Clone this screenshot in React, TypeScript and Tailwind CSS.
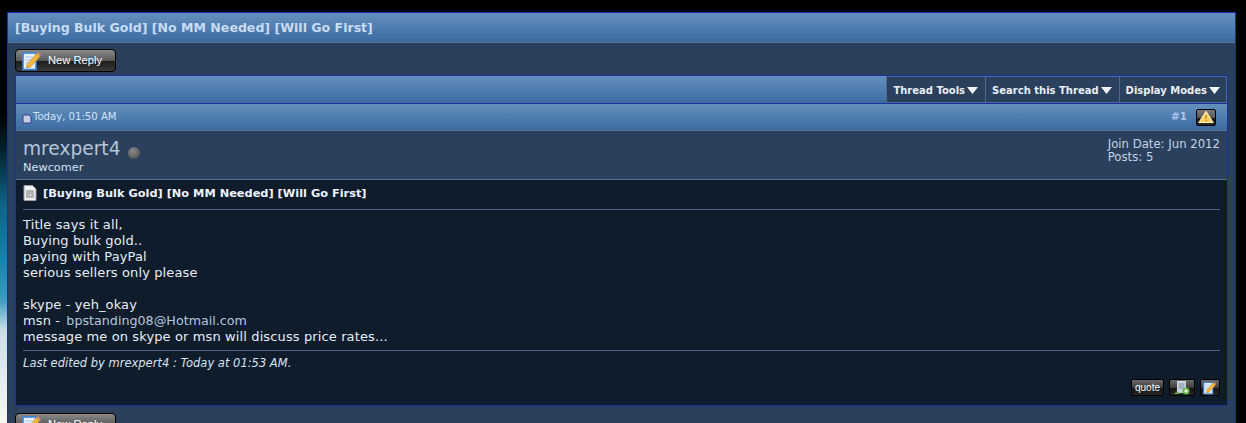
import React from "react";

const font = "font-['DejaVu_Sans',Verdana,sans-serif]";

function PencilDoc({ size = 20 }: { size?: number }) {
  return (
    <svg width={size} height={size} viewBox="0 0 20 20" className="shrink-0">
      <rect x="1" y="2" width="13" height="16.5" fill="#e4eefc" stroke="#3a86de" strokeWidth="1.6" />
      <path d="M3.5 6h7M3.5 9h5M3.5 12h4" stroke="#a9c4e4" strokeWidth="1" />
      <path d="M5 13.5 L14.5 2.5 L18 5.5 L8.5 16 L4.5 17 Z" fill="#f3b63e" stroke="#b9802a" strokeWidth="0.6" />
      <path d="M14.5 2.5 L18 5.5 L19 4 L16 1.2 Z" fill="#e98a7a" />
    </svg>
  );
}

function NewReply() {
  return (
    <button className="w-[101px] h-[23px] rounded-[4px] border border-black bg-[linear-gradient(#8a8a8a_0%,#5a5a5a_50%,#1b1b1b_52%,#3a3a3a_100%)] flex items-center pl-[6px] shrink-0">
      <PencilDoc />
      <span className="ml-[6px] text-white text-[11.2px] font-['Liberation_Sans',Arial,sans-serif] leading-none">New Reply</span>
    </button>
  );
}

function Caret() {
  return (
    <svg width="11" height="7" viewBox="0 0 11 7" className="ml-[2px]">
      <path d="M0 0H11L5.5 7Z" fill="#f2f6fb" />
    </svg>
  );
}

function Tool({ label, last }: { label: string; last?: boolean }) {
  return (
    <div className={`h-full flex items-center pl-[6px] pt-[2px] border-l border-y border-[#4f6a90] bg-[#2b405c] text-[#e8eef6] text-[10px] font-bold whitespace-nowrap ${last ? "border-r pr-[6px]" : "pr-[7px]"}`}>
      {label}
      <Caret />
    </div>
  );
}

function SmallBtn({ children, w }: { children: React.ReactNode; w: string }) {
  return (
    <div className={`${w} h-[17px] rounded-[2px] border border-black bg-[linear-gradient(#6a6a6a_0%,#3e3e3e_50%,#141414_52%,#262626_100%)] flex items-center justify-center`}>
      {children}
    </div>
  );
}

export default function App() {
  return (
    <div className={`${font} w-[1246px] h-[423px] overflow-hidden bg-black flex`}>
      <div className="w-[7px] h-full shrink-0 bg-[linear-gradient(#000_0px,#000_110px,#04222e_150px,#0d5f80_200px,#1583ae_260px,#3d9cc0_300px,#c9dde6_330px,#eef2f4_400px,#f5f5f5_423px)]" />
      <div className="w-[1229px] h-[440px] shrink-0 mt-[12px] border border-[#1c2ea0] bg-[#2b405c] flex flex-col">
        <div className="h-[30px] shrink-0 bg-[linear-gradient(#6490bd,#3c6ba2)] border-b border-[#56708f] flex items-center pl-[7px] pt-[2px] text-[#c9dcf3] text-[12.55px] font-bold">
          [Buying Bulk Gold] [No MM Needed] [Will Go First]
        </div>
        <div className="px-[7px] pt-[6px] flex flex-col">
          <NewReply />
          <div className="mt-[3px] border border-[#1c2ea0] bg-[#2b405c] flex flex-col">
            <div className="h-[27px] bg-[linear-gradient(#6490bd,#3c6ba2)] flex justify-end">
              <Tool label="Thread Tools" />
              <Tool label="Search this Thread" />
              <Tool label="Display Modes" last />
            </div>
            <div className="h-px bg-[#1c2ea0]" />
            <div className="h-[26px] bg-[linear-gradient(#6490bd,#3c6ba2)] flex items-center pl-[6px] pr-[11px] text-[10.1px] text-[#d3e2f5]">
              <svg width="10" height="10" viewBox="0 0 10 10" className="mt-[3px]">
                <path d="M1 1H7L9 3V9H1Z" fill="#c3cde8" stroke="#3a3f78" />
              </svg>
              <span className="ml-[1px]">Today, 01:50 AM</span>
              <span className="ml-auto text-[#a9c2ee] font-bold text-[10.5px]">#1</span>
              <div className="ml-[9px] w-[20px] h-[17px] border border-black rounded-[2px] bg-[linear-gradient(#7a7a7a,#5a5a5a_50%,#1c1c1c_52%,#2a2a2a)] flex items-center justify-center">
                <svg width="16" height="14" viewBox="0 0 16 14">
                  <path d="M8 1.5L15 12.5H1Z" fill="#f6cf5e" stroke="#fff0b8" strokeWidth="1.2" strokeLinejoin="round" />
                  <path d="M8 5v4M8 10v1.2" stroke="#c68a16" strokeWidth="1.4" />
                </svg>
              </div>
            </div>
            <div className="h-[50px] border-t border-b border-[#56708f] bg-[#2b405c] flex justify-between pl-[7px] pr-[7px]">
              <div className="flex flex-col pt-[6px]">
                <div className="flex items-center h-[24px]">
                  <span className="text-[#b7c5d9] text-[18.6px] leading-none">mrexpert4</span>
                  <span className="ml-[8px] mt-[7px] w-[12px] h-[12px] rounded-full bg-[radial-gradient(circle_at_40%_35%,#8a8a8a,#454545)]" />
                </div>
                <span className="text-[#d3e2f5] text-[11.3px] leading-[13px]">Newcomer</span>
              </div>
              <div className="pt-[7px] text-[#c4d3e6] text-[11.7px] leading-[13px]">
                <div>Join Date: Jun 2012</div>
                <div>Posts: 5</div>
              </div>
            </div>
            <div className="h-[225px] bg-[#0f1c2c] px-[7px] pt-[4px] flex flex-col text-[#e6edf5] text-[13px] leading-[16px]">
              <div className="flex items-center h-[17px] text-[11.35px] font-bold text-[#eef3f9]">
                <svg width="14" height="16" viewBox="0 0 14 16">
                  <path d="M1 .5H9.5L13 4V15.5H1Z" fill="#eef0f2" stroke="#9a9a9a" />
                  <path d="M3 6h8M3 8h8M3 10h4M8 10h3M3 12h8" stroke="#777" />
                </svg>
                <span className="ml-[6px]">[Buying Bulk Gold] [No MM Needed] [Will Go First]</span>
              </div>
              <div className="h-px bg-[#4d6387] mt-[8px] shrink-0" />
              <div className="mt-[7px] text-[13px] tracking-[0.12px]">
                <div>Title says it all,</div>
                <div>Buying bulk gold..</div>
                <div>paying with PayPal</div>
                <div>serious sellers only please</div>
                <div className="h-[16px]" />
                <div>skype - yeh_okay</div>
                <div>msn - <span className="ml-[2px] text-[#b5c6dc] text-[12.7px] tracking-normal">bpstanding08@Hotmail.com</span></div>
                <div>message me on skype or msn will discuss price rates...</div>
              </div>
              <div className="h-px bg-[#4d6387] mt-[5px] shrink-0" />
              <div className="mt-[6px] italic text-[11.5px] leading-[13px] text-[#d8e3f0]">Last edited by mrexpert4 : Today at 01:53 AM.</div>
              <div className="mt-[9px] flex justify-end gap-[5px] items-center">
                <SmallBtn w="w-[33px]">
                  <span className="text-white text-[10px] font-['Liberation_Sans',Arial,sans-serif] leading-none">quote</span>
                </SmallBtn>
                <SmallBtn w="w-[26px]">
                  <svg width="16" height="15" viewBox="0 0 16 15">
                    <rect x="3" y="1" width="9" height="12" fill="#c9d4e3" />
                    <path d="M4.5 4h6M4.5 6h6M4.5 8h6" stroke="#7a8aa0" />
                    <path d="M0 14l3-3 3 3Z" fill="#5fa04a" />
                    <circle cx="12" cy="11" r="3.6" fill="#64b246" />
                    <path d="M10 11h4M12 9v4" stroke="#fff" />
                  </svg>
                </SmallBtn>
                <SmallBtn w="w-[20px]">
                  <PencilDoc size={14} />
                </SmallBtn>
              </div>
            </div>
          </div>
          <div className="mt-[7px]">
            <NewReply />
          </div>
        </div>
      </div>
    </div>
  );
}
